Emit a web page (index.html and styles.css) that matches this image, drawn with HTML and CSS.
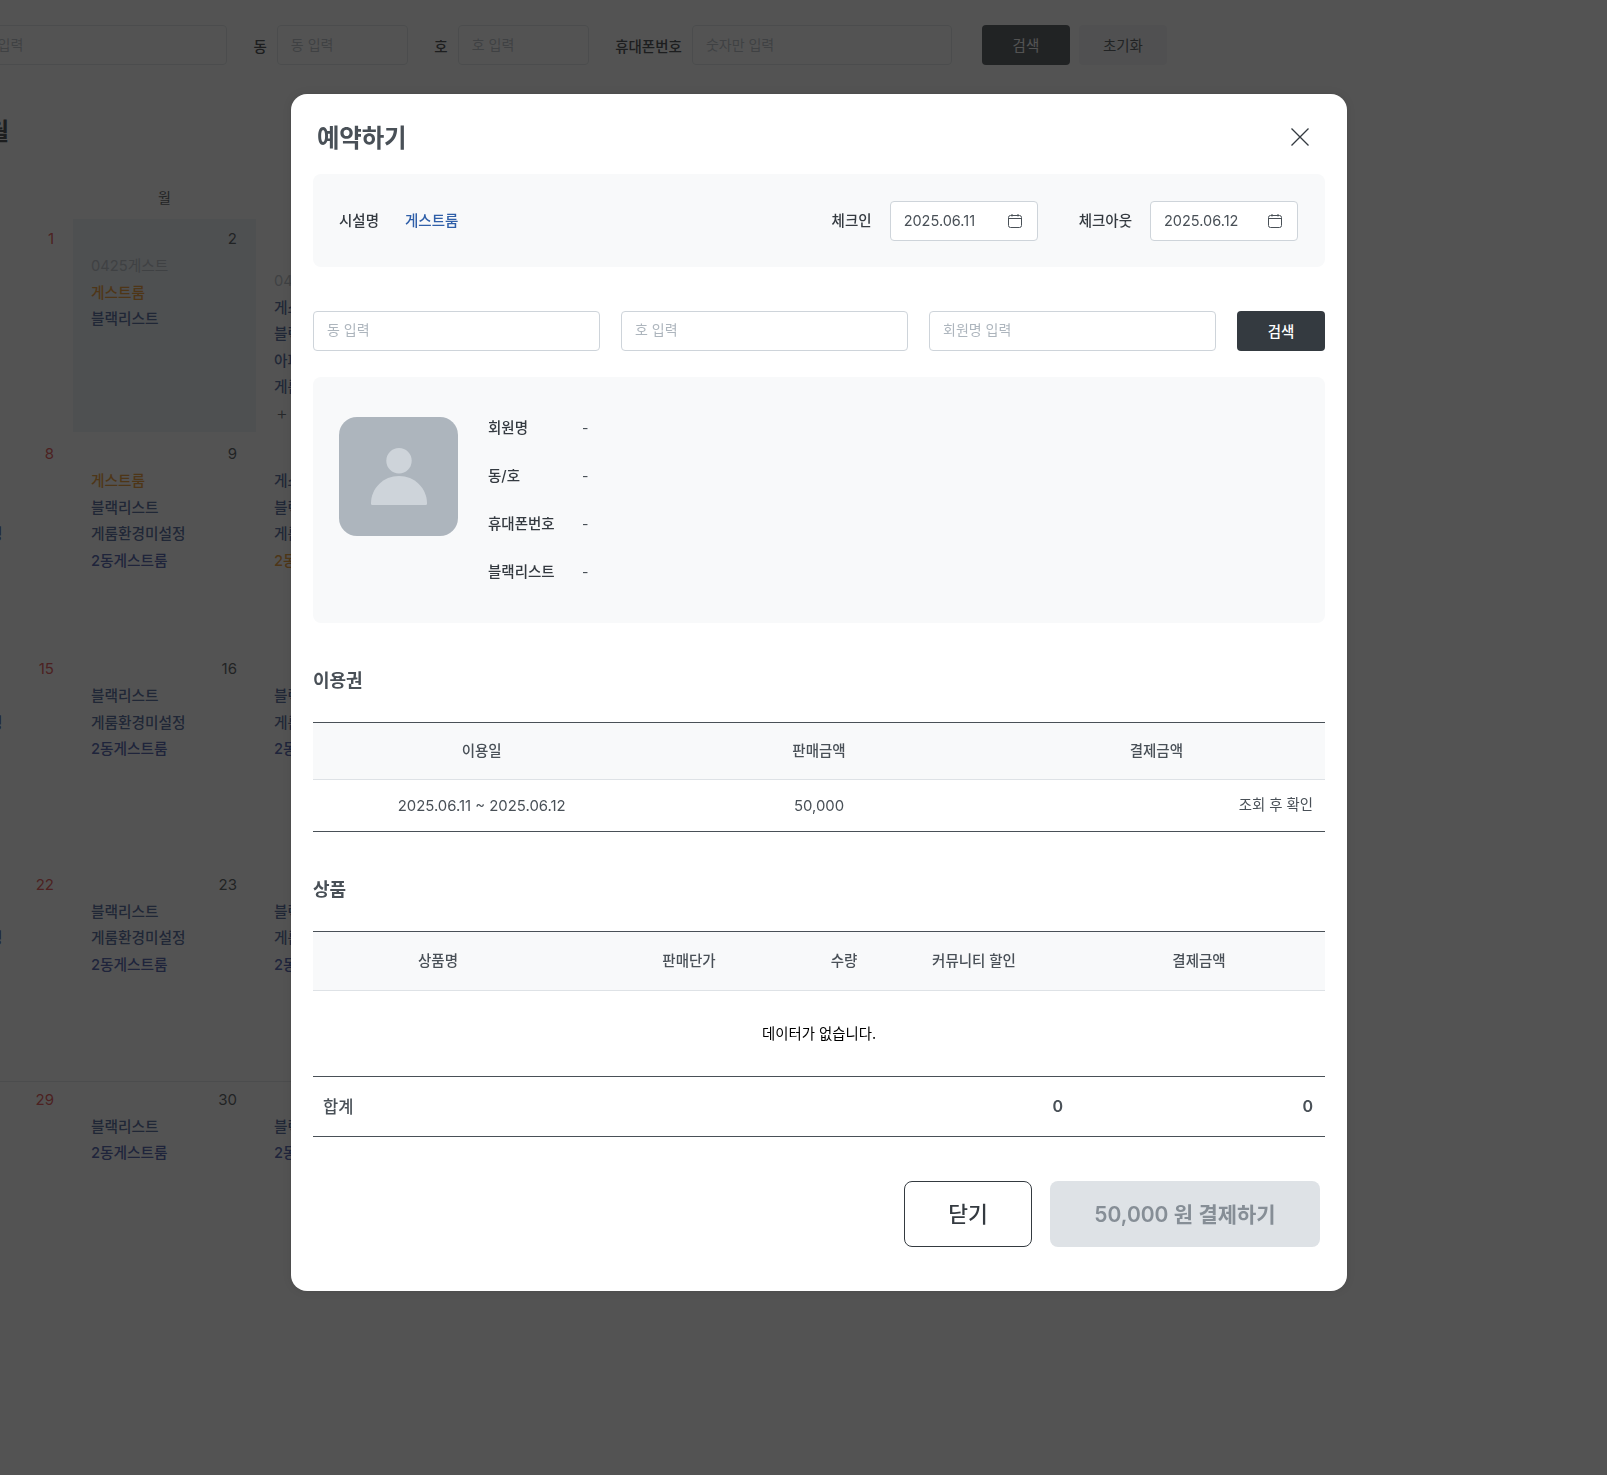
FILE: index.html
```html
<!DOCTYPE html>
<html lang="ko">
<head>
  <meta charset="UTF-8">
  <title>예약하기</title>
  <link rel="stylesheet" href="styles.css">
</head>
<body>
  <!-- page behind the modal -->
  <div class="page">
    <div class="filter-bar">
      <input class="filter-input filter-name" placeholder="회원명 입력">
      <label class="filter-label">동</label>
      <input class="filter-input filter-short" placeholder="동 입력">
      <label class="filter-label">호</label>
      <input class="filter-input filter-short" placeholder="호 입력">
      <label class="filter-label">휴대폰번호</label>
      <input class="filter-input filter-phone" placeholder="숫자만 입력">
      <button class="filter-btn filter-search">검색</button>
      <button class="filter-btn filter-reset">초기화</button>
    </div>

    <h2 class="month-title">2025년 6월</h2>

    <div class="week-head">
      <div></div>
      <div>월</div>
      <div></div>
    </div>

    <div class="calendar">
      <div class="day"><div class="day-num sun">1</div></div>
      <div class="day today">
        <div class="day-num">2</div>
        <div class="ev ev-off">0425게스트</div>
        <div class="ev ev-orange">게스트룸</div>
        <div class="ev">블랙리스트</div>
      </div>
      <div class="day">
        <div class="day-num">&nbsp;</div>
        <div class="ev ev-off ev-lower">0425게스트</div>
        <div class="ev">게스트룸</div>
        <div class="ev">블랙리스트</div>
        <div class="ev">아파트</div>
        <div class="ev">게룸환경미설정</div>
        <div class="ev-more">+</div>
      </div>

      <div class="day">
        <div class="day-num sun">8</div>
        <div class="ev">&nbsp;</div>
        <div class="ev">&nbsp;</div>
        <div class="ev">게룸환경미설정</div>
      </div>
      <div class="day">
        <div class="day-num">9</div>
        <div class="ev ev-orange">게스트룸</div>
        <div class="ev">블랙리스트</div>
        <div class="ev">게룸환경미설정</div>
        <div class="ev ev-blue">2동게스트룸</div>
      </div>
      <div class="day">
        <div class="day-num">&nbsp;</div>
        <div class="ev">게스트룸</div>
        <div class="ev">블랙리스트</div>
        <div class="ev">게룸환경미설정</div>
        <div class="ev ev-orange">2동게스트룸</div>
      </div>

      <div class="day">
        <div class="day-num sun">15</div>
        <div class="ev">&nbsp;</div>
        <div class="ev">게룸환경미설정</div>
      </div>
      <div class="day">
        <div class="day-num">16</div>
        <div class="ev">블랙리스트</div>
        <div class="ev">게룸환경미설정</div>
        <div class="ev ev-blue">2동게스트룸</div>
      </div>
      <div class="day">
        <div class="day-num">&nbsp;</div>
        <div class="ev">블랙리스트</div>
        <div class="ev">게룸환경미설정</div>
        <div class="ev ev-blue">2동게스트룸</div>
      </div>

      <div class="day">
        <div class="day-num sun">22</div>
        <div class="ev">&nbsp;</div>
        <div class="ev">게룸환경미설정</div>
      </div>
      <div class="day">
        <div class="day-num">23</div>
        <div class="ev">블랙리스트</div>
        <div class="ev">게룸환경미설정</div>
        <div class="ev ev-blue">2동게스트룸</div>
      </div>
      <div class="day">
        <div class="day-num">&nbsp;</div>
        <div class="ev">블랙리스트</div>
        <div class="ev">게룸환경미설정</div>
        <div class="ev ev-blue">2동게스트룸</div>
      </div>

      <div class="day last-row"><div class="day-num sun">29</div></div>
      <div class="day last-row">
        <div class="day-num">30</div>
        <div class="ev">블랙리스트</div>
        <div class="ev ev-blue">2동게스트룸</div>
      </div>
      <div class="day last-row">
        <div class="day-num">&nbsp;</div>
        <div class="ev">블랙리스트</div>
        <div class="ev ev-blue">2동게스트룸</div>
      </div>
    </div>
  </div>

  <!-- modal -->
  <div class="overlay">
    <div class="modal">
      <div class="modal-head">
        <h1 class="modal-title">예약하기</h1>
        <button class="modal-close">
          <svg width="18" height="18" viewBox="0 0 18 18"><path d="M.5.5l17 17M17.5.5l-17 17" stroke="#343a40" stroke-width="1.3" fill="none"/></svg>
        </button>
      </div>

      <div class="info-box">
        <span class="info-label">시설명</span>
        <span class="info-value">게스트룸</span>
        <span class="info-label check-first">체크인</span>
        <div class="date-input">
          <span>2025.06.11</span>
          <svg width="14" height="14" viewBox="0 0 14 14"><rect x=".5" y="1.5" width="13" height="12" rx="2" fill="none" stroke="#495057"/><path d="M.5 4.5h13M4 0v2.5M10 0v2.5" stroke="#495057" fill="none"/></svg>
        </div>
        <span class="info-label check-second">체크아웃</span>
        <div class="date-input">
          <span>2025.06.12</span>
          <svg width="14" height="14" viewBox="0 0 14 14"><rect x=".5" y="1.5" width="13" height="12" rx="2" fill="none" stroke="#495057"/><path d="M.5 4.5h13M4 0v2.5M10 0v2.5" stroke="#495057" fill="none"/></svg>
        </div>
      </div>

      <div class="search-row">
        <input class="search-input" placeholder="동 입력">
        <input class="search-input" placeholder="호 입력">
        <input class="search-input" placeholder="회원명 입력">
        <button class="search-btn">검색</button>
      </div>

      <div class="member-box">
        <div class="avatar">
          <svg width="56" height="57" viewBox="0 0 56 57"><circle cx="28" cy="12.7" r="12.7" fill="#ced4da"/><path d="M0 55.500C0 40 12.500 28 28 28S56 40 56 55.500c0 1-.7 1.500-1.500 1.500h-53C.7 57 0 56.500 0 55.500z" fill="#ced4da"/></svg>
        </div>
        <dl class="member-info">
          <div class="member-row"><dt>회원명</dt><dd>-</dd></div>
          <div class="member-row"><dt>동/호</dt><dd>-</dd></div>
          <div class="member-row"><dt>휴대폰번호</dt><dd>-</dd></div>
          <div class="member-row"><dt>블랙리스트</dt><dd>-</dd></div>
        </dl>
      </div>

      <h3 class="section-title">이용권</h3>
      <table class="data-table ticket-table">
        <thead>
          <tr><th>이용일</th><th>판매금액</th><th>결제금액</th></tr>
        </thead>
        <tbody>
          <tr>
            <td>2025.06.11 ~ 2025.06.12</td>
            <td>50,000</td>
            <td class="cell-right">조회 후 확인</td>
          </tr>
        </tbody>
      </table>

      <h3 class="section-title">상품</h3>
      <table class="data-table goods-table">
        <colgroup>
          <col class="col-name"><col class="col-price"><col class="col-qty"><col class="col-sale"><col class="col-pay">
        </colgroup>
        <thead>
          <tr><th>상품명</th><th>판매단가</th><th>수량</th><th>커뮤니티 할인</th><th class="th-pay">결제금액</th></tr>
        </thead>
        <tbody>
          <tr><td class="cell-empty" colspan="5">데이터가 없습니다.</td></tr>
        </tbody>
        <tfoot>
          <tr>
            <td class="total-label" colspan="3">합계</td>
            <td class="total-num">0</td>
            <td class="total-num">0</td>
          </tr>
        </tfoot>
      </table>

      <div class="modal-foot">
        <button class="btn-close">닫기</button>
        <button class="btn-pay" disabled>50,000 원 결제하기</button>
      </div>
    </div>
  </div>
</body>
</html>
```

FILE: styles.css
```css
* {
  box-sizing: border-box;
}

html, body {
  margin: 0;
  padding: 0;
  height: 100%;
  overflow: hidden;
}

body {
  background: #fff;
  color: #343a40;
  font-family: "Inter", "Noto Sans CJK KR", sans-serif;
  font-size: 14px;
}

input, button {
  font-family: inherit;
}

/* page behind the modal */
.page {
  width: 1607px;
  height: 1475px;
  overflow: hidden;
}

.filter-bar {
  display: flex;
  align-items: center;
  height: 40px;
  margin: 25px 0 0 -59px;
}

.filter-input {
  height: 40px;
  padding: 0 13px 2px;
  border: 1px solid #dee2e6;
  border-radius: 4px;
  font-size: 14px;
  background: #fff;
}

.filter-input::placeholder {
  color: #adb5bd;
}

.filter-name {
  width: 286px;
}

.filter-short {
  width: 131px;
}

.filter-phone {
  width: 260px;
}

.filter-label {
  margin: 0 10px 0 26.5px;
  font-size: 14.5px;
  font-weight: 500;
  color: #212529;
}

.filter-btn {
  width: 88px;
  height: 40px;
  padding: 0 0 2px;
  border: 0;
  border-radius: 4px;
  font-size: 14.5px;
}

.filter-search {
  margin-left: 30px;
  background: #343a40;
  color: #fff;
}

.filter-reset {
  margin-left: 9px;
  background: #f1f3f5;
  color: #343a40;
}

.month-title {
  width: 134px;
  margin: 50px 0 0 -125px;
  font-size: 24px;
  line-height: 34px;
  font-weight: 700;
  text-align: right;
  white-space: nowrap;
  color: #212529;
}

.week-head {
  display: grid;
  grid-template-columns: repeat(3, 183px);
  margin: 37px 0 0 -110px;
  line-height: 24px;
  text-align: center;
  color: #343a40;
}

.calendar {
  display: grid;
  grid-template-columns: repeat(3, 183px);
  grid-auto-rows: 215.2px;
  margin: 7px 0 0 -110px;
}

.day {
  padding: 10px 19px 0 18px;
  background: #fff;
}

.today {
  margin-top: 2px;
  padding-top: 8px;
  background: #e9f0f7;
}

.last-row {
  margin-top: 3px;
  padding-top: 6px;
  border-top: 1px solid #dee2e6;
}

.day-num {
  height: 24px;
  line-height: 24px;
  margin-bottom: 2px;
  text-align: right;
  font-size: 15px;
  color: #343a40;
}

.sun {
  color: #e03131;
}

.ev {
  height: 26.5px;
  line-height: 26.5px;
  font-size: 14.7px;
  font-weight: 500;
  white-space: nowrap;
  color: #2f4a8a;
}

.ev-off {
  color: #adb5bd;
  font-weight: 400;
}

.ev-lower {
  margin-top: 17px;
}

.ev-orange {
  color: #e8890c;
}

.ev-blue {
  color: #2a3f9e;
}

.ev-more {
  height: 26.5px;
  margin-left: 2px;
  line-height: 26.5px;
  font-size: 18px;
  font-weight: 300;
  color: #495057;
}

/* modal */
.overlay {
  position: fixed;
  top: 0;
  left: 0;
  width: 100%;
  height: 100%;
  padding: 94px 0 0 291px;
  background: rgba(28, 28, 28, 0.755);
}

.modal {
  width: 1056px;
  padding: 22px 22px 44px;
  background: #fff;
  border-radius: 16px;
  box-shadow: 0 0 8px rgba(0, 0, 0, 0.12);
}

.modal-head {
  display: flex;
  align-items: center;
  justify-content: space-between;
  height: 42px;
  margin-bottom: 16px;
}

.modal-title {
  margin: 1px 0 0 4px;
  font-size: 24.5px;
  line-height: 42px;
  font-weight: 700;
  color: #495057;
  letter-spacing: -0.2px;
}

.modal-close {
  display: flex;
  margin-right: 16px;
  padding: 0;
  background: none;
  border: 0;
}

.info-box {
  display: flex;
  align-items: flex-start;
  height: 93px;
  padding: 27px 27px 0 26px;
  background: #f8f9fa;
  border-radius: 8px;
}

.info-label {
  line-height: 40px;
  font-size: 14.5px;
  font-weight: 500;
  color: #343a40;
}

.info-value {
  margin-left: 26px;
  line-height: 40px;
  font-size: 14.5px;
  font-weight: 500;
  color: #2f5fa8;
}

.check-first {
  margin-left: auto;
  margin-right: 18px;
}

.check-second {
  margin-left: 41px;
  margin-right: 18px;
}

.date-input {
  display: flex;
  align-items: center;
  justify-content: space-between;
  width: 148px;
  height: 40px;
  padding: 0 15px 1px 13px;
  background: #fff;
  border: 1px solid #ced4da;
  border-radius: 4px;
  font-size: 14.5px;
  color: #495057;
}

.search-row {
  display: flex;
  gap: 21px;
  margin-top: 44px;
}

.search-input {
  flex: 1;
  min-width: 0;
  height: 40px;
  padding: 0 13px 3px;
  border: 1px solid #ced4da;
  border-radius: 4px;
  font-size: 14px;
}

.search-input::placeholder {
  color: #adb5bd;
}

.search-btn {
  width: 88px;
  height: 40px;
  padding: 0 0 1px;
  background: #343a40;
  color: #fff;
  border: 0;
  border-radius: 4px;
  font-size: 14.5px;
  font-weight: 500;
}

.member-box {
  display: flex;
  height: 246px;
  margin-top: 26px;
  padding: 40px 26px 0;
  background: #f8f9fa;
  border-radius: 8px;
}

.avatar {
  display: flex;
  align-items: flex-start;
  justify-content: center;
  width: 119px;
  height: 119px;
  padding-top: 31px;
  background: #adb5bd;
  border-radius: 18px;
}

.avatar svg {
  flex: none;
}

.member-info {
  margin: -1px 0 0 30px;
}

.member-row {
  display: flex;
  height: 48px;
  line-height: 24px;
}

.member-row dt {
  width: 94px;
  font-size: 14.5px;
  font-weight: 500;
  color: #343a40;
}

.member-row dd {
  margin: 0;
  color: #495057;
}

.section-title {
  margin: 45px 0 28px;
  font-size: 18px;
  line-height: 26px;
  font-weight: 700;
  color: #495057;
}

.data-table {
  width: 100%;
  border-collapse: collapse;
  table-layout: fixed;
  border-top: 1px solid #495057;
  border-bottom: 1px solid #495057;
}

.data-table th {
  padding: 0 0 4px;
  background: #f8f9fa;
  border-bottom: 1px solid #dee2e6;
  font-size: 14.5px;
  font-weight: 500;
  color: #495057;
}

.data-table td {
  text-align: center;
  color: #495057;
}

.ticket-table th {
  height: 57px;
}

.ticket-table td {
  height: 52px;
  font-size: 14.9px;
}

.data-table .cell-right {
  padding: 0 12px 5px 0;
  text-align: right;
  font-size: 14.4px;
}

.col-name {
  width: 250px;
}

.col-price {
  width: 252px;
}

.col-qty {
  width: 58px;
}

.col-sale {
  width: 202px;
}

.col-pay {
  width: 250px;
}

.goods-table th {
  height: 59px;
}

.data-table .th-pay {
  padding-right: 2px;
}

.data-table .cell-empty {
  height: 86px;
  padding-bottom: 4px;
  font-size: 14.4px;
  color: #000;
}

.goods-table tfoot td {
  height: 60px;
  padding-bottom: 3px;
  border-top: 1px solid #495057;
  font-size: 16.5px;
  font-weight: 500;
  color: #495057;
}

.goods-table .total-label {
  padding-left: 10px;
  text-align: left;
}

.goods-table .total-num {
  padding-right: 12px;
  text-align: right;
  font-size: 16px;
  font-weight: 600;
}

.modal-foot {
  display: flex;
  justify-content: flex-end;
  gap: 18px;
  margin-top: 44px;
  padding-right: 5px;
}

.btn-close {
  width: 128px;
  height: 66px;
  padding: 0 0 3px;
  background: #fff;
  border: 1px solid #343a40;
  border-radius: 8px;
  font-size: 21.5px;
  font-weight: 500;
  color: #343a40;
}

.btn-pay {
  width: 270px;
  height: 66px;
  padding: 0 0 3px;
  background: #dee2e6;
  border: 0;
  border-radius: 8px;
  font-size: 21px;
  font-weight: 600;
  color: #868e96;
}
```
